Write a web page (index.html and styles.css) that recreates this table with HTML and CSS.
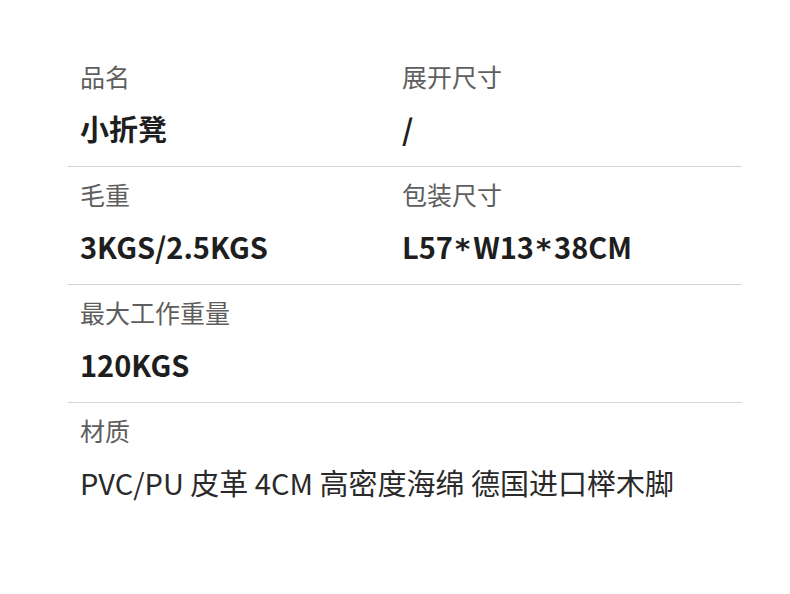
FILE: index.html
```html
<!DOCTYPE html>
<html lang="zh">
<head>
<meta charset="utf-8">
<link rel="stylesheet" href="styles.css">
</head>
<body>
<div class="spec">
  <div class="row">
    <div class="cell first">
      <div class="label">品名</div>
      <div class="value">小折凳</div>
    </div>
    <div class="cell">
      <div class="label">展开尺寸</div>
      <div class="value">/</div>
    </div>
  </div>
  <div class="row">
    <div class="cell first">
      <div class="label">毛重</div>
      <div class="value">3KGS/2.5KGS</div>
    </div>
    <div class="cell">
      <div class="label">包装尺寸</div>
      <div class="value">L57<span class="star">*</span>W13<span class="star">*</span>38CM</div>
    </div>
  </div>
  <div class="row">
    <div class="cell first">
      <div class="label">最大工作重量</div>
      <div class="value">120KGS</div>
    </div>
    <div class="cell"></div>
  </div>
  <div class="row last">
    <div class="cell first wide">
      <div class="label">材质</div>
      <div class="value light">PVC/PU 皮革 4CM 高密度海绵 德国进口榉木脚</div>
    </div>
  </div>
</div>
</body>
</html>
```
FILE: styles.css
```css
html, body {
  margin: 0;
  padding: 0;
  background: #ffffff;
}
body {
  font-family: "Noto Sans CJK SC", "Noto Sans", sans-serif;
  width: 790px;
  height: 594px;
  overflow: hidden;
}
.spec {
  margin: 49px 0 0 68px;
  width: 674px;
}
.row {
  display: grid;
  grid-template-columns: 334px 1fr;
  border-bottom: 1px solid #d4d4d4;
  padding: 9px 0 18px;
}
.row.last {
  border-bottom: none;
}
.cell.first {
  padding-left: 12px;
}
.cell.wide {
  grid-column: 1 / 3;
}
.label {
  font-size: 25px;
  line-height: 36px;
  height: 36px;
  color: #5e5e5e;
}
.value {
  margin-top: 14px;
  font-size: 29px;
  line-height: 40px;
  height: 40px;
  font-weight: 700;
  color: #1e1e1e;
}
.value .star {
  font-family: "DejaVu Sans", sans-serif;
  margin: 0 3px 0 2px;
}
.value.light {
  font-weight: 400;
  color: #2a2a2a;
}
```
